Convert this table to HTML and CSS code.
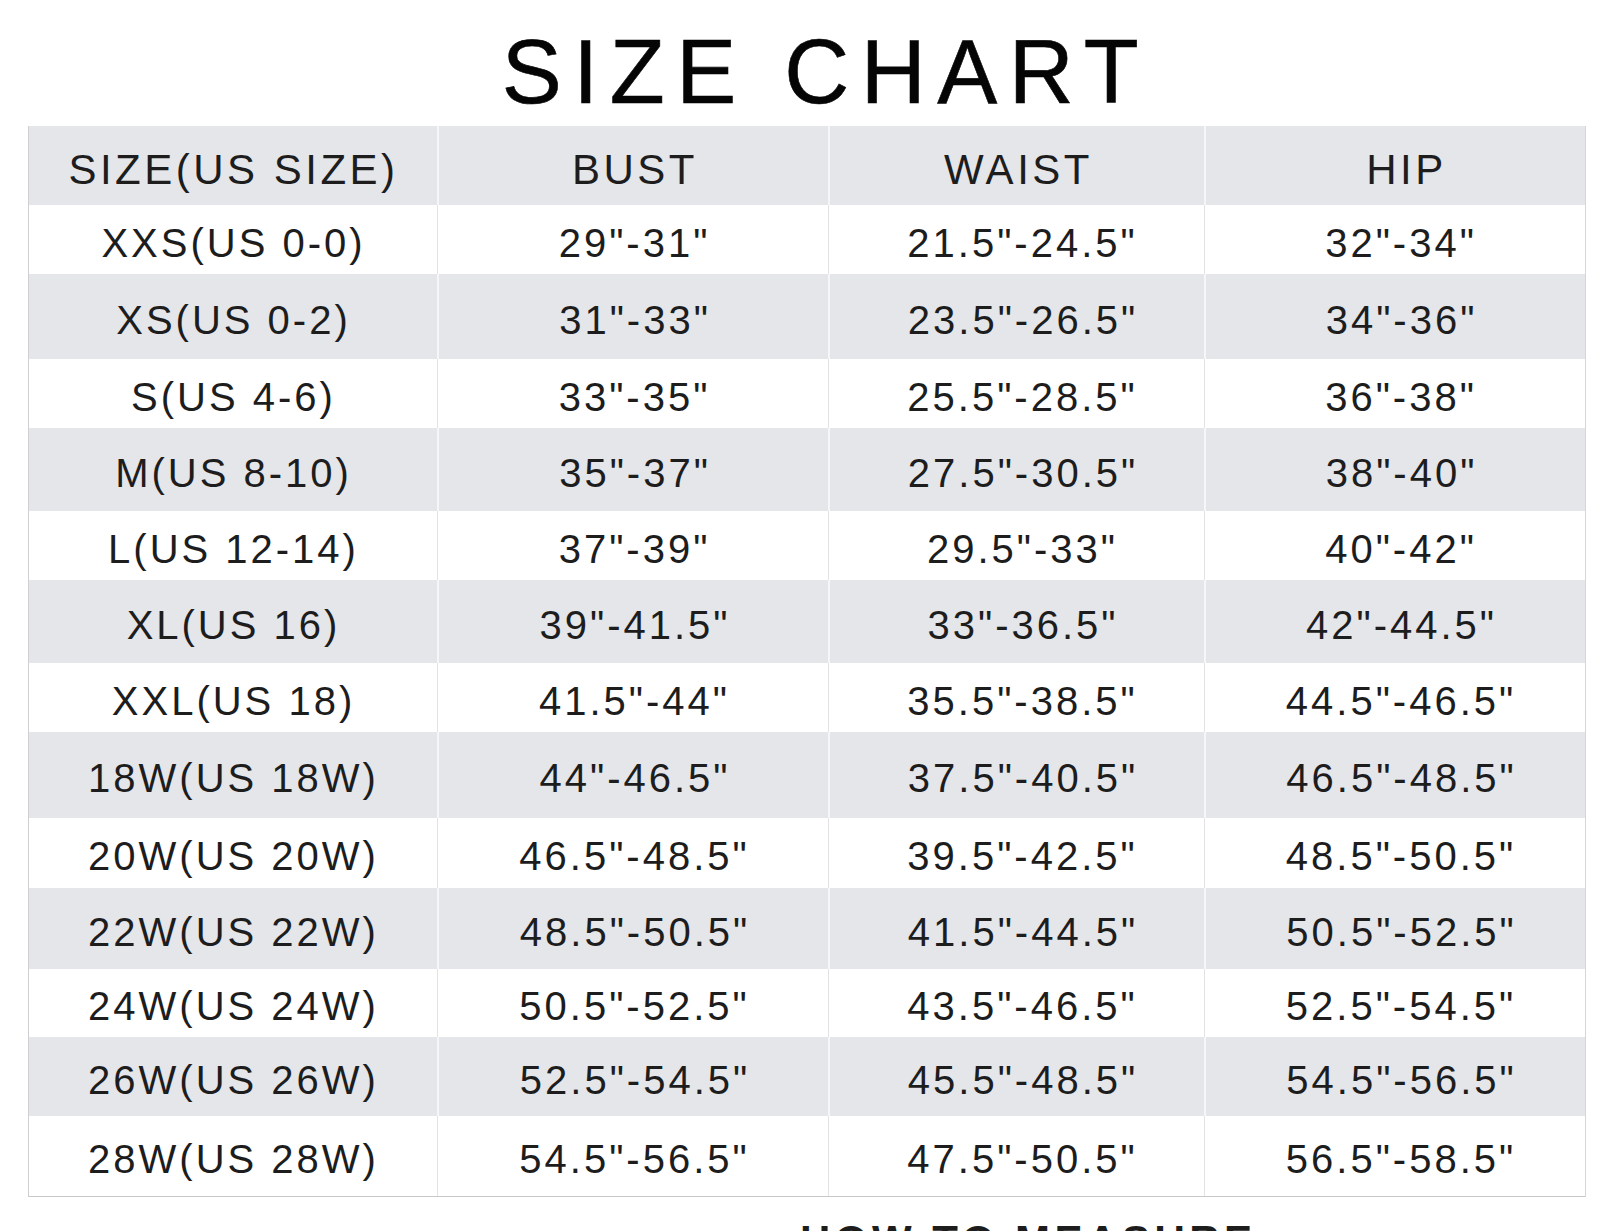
FILE: index.html
```html
<!DOCTYPE html>
<html lang="en">
<head>
<meta charset="utf-8">
<title>Size Chart</title>
<link rel="stylesheet" href="styles.css">
</head>
<body>
<main class="page">
  <h1 class="title">SIZE CHART</h1>
  <div class="chart">
    <div class="row head grey">
      <div class="cell">SIZE(US SIZE)</div><div class="cell">BUST</div><div class="cell">WAIST</div><div class="cell">HIP</div>
    </div>
    <div class="row white">
      <div class="cell">XXS(US 0-0)</div><div class="cell">29"-31"</div><div class="cell">21.5"-24.5"</div><div class="cell">32"-34"</div>
    </div>
    <div class="row grey">
      <div class="cell">XS(US 0-2)</div><div class="cell">31"-33"</div><div class="cell">23.5"-26.5"</div><div class="cell">34"-36"</div>
    </div>
    <div class="row white">
      <div class="cell">S(US 4-6)</div><div class="cell">33"-35"</div><div class="cell">25.5"-28.5"</div><div class="cell">36"-38"</div>
    </div>
    <div class="row grey">
      <div class="cell">M(US 8-10)</div><div class="cell">35"-37"</div><div class="cell">27.5"-30.5"</div><div class="cell">38"-40"</div>
    </div>
    <div class="row white">
      <div class="cell">L(US 12-14)</div><div class="cell">37"-39"</div><div class="cell">29.5"-33"</div><div class="cell">40"-42"</div>
    </div>
    <div class="row grey">
      <div class="cell">XL(US 16)</div><div class="cell">39"-41.5"</div><div class="cell">33"-36.5"</div><div class="cell">42"-44.5"</div>
    </div>
    <div class="row white">
      <div class="cell">XXL(US 18)</div><div class="cell">41.5"-44"</div><div class="cell">35.5"-38.5"</div><div class="cell">44.5"-46.5"</div>
    </div>
    <div class="row grey">
      <div class="cell">18W(US 18W)</div><div class="cell">44"-46.5"</div><div class="cell">37.5"-40.5"</div><div class="cell">46.5"-48.5"</div>
    </div>
    <div class="row white">
      <div class="cell">20W(US 20W)</div><div class="cell">46.5"-48.5"</div><div class="cell">39.5"-42.5"</div><div class="cell">48.5"-50.5"</div>
    </div>
    <div class="row grey">
      <div class="cell">22W(US 22W)</div><div class="cell">48.5"-50.5"</div><div class="cell">41.5"-44.5"</div><div class="cell">50.5"-52.5"</div>
    </div>
    <div class="row white">
      <div class="cell">24W(US 24W)</div><div class="cell">50.5"-52.5"</div><div class="cell">43.5"-46.5"</div><div class="cell">52.5"-54.5"</div>
    </div>
    <div class="row grey">
      <div class="cell">26W(US 26W)</div><div class="cell">52.5"-54.5"</div><div class="cell">45.5"-48.5"</div><div class="cell">54.5"-56.5"</div>
    </div>
    <div class="row white">
      <div class="cell">28W(US 28W)</div><div class="cell">54.5"-56.5"</div><div class="cell">47.5"-50.5"</div><div class="cell">56.5"-58.5"</div>
    </div>
  </div>
  <h2 class="measure">HOW TO MEASURE</h2>
</main>
</body>
</html>
```
FILE: styles.css
```css
html, body {
  margin: 0;
  padding: 0;
  background: #ffffff;
  height: 1231px;
  overflow: hidden;
}

.page {
  display: flex;
  flex-direction: column;
  font-family: "Liberation Sans", Arial, sans-serif;
  color: #1d1d1d;
}

.title {
  margin: 27px 0 0 0;
  padding-left: 52px;
  height: 90px;
  font-size: 90px;
  line-height: 1;
  font-weight: 400;
  letter-spacing: 11.5px;
  text-align: center;
  color: #050505;
  -webkit-text-stroke: 0.6px #050505;
}

.chart {
  margin: 9px 0 0 28px;
  width: 1558px;
  box-sizing: border-box;
  border-left: 1px solid #cfcfd2;
  border-right: 1px solid #d6d6d8;
  border-bottom: 1px solid #c9c9cb;
  display: grid;
  grid-template-rows: 79px 69px 85px 69px 83px 69px 83px 69px 86px 70px 81px 68px 79px 80px;
}

.row {
  display: grid;
  grid-template-columns: 408px 391px 376px 381px;
}

.grey {
  background: #e5e6ea;
}

.white {
  background: #ffffff;
}

.cell {
  display: flex;
  align-items: center;
  justify-content: center;
  box-sizing: border-box;
  padding: 6px 0 0 3px;
  font-size: 40px;
  line-height: 1;
  letter-spacing: 3px;
  white-space: nowrap;
}

.cell:first-child {
  padding-left: 1px;
  padding-right: 0;
}

.cell:nth-child(3),
.cell:nth-child(4) {
  padding-left: 12px;
}

.grey .cell + .cell {
  border-left: 2px solid #f6f6f8;
}

.white .cell + .cell {
  border-left: 1px solid #e3e3e5;
}

.head .cell {
  font-size: 42px;
  letter-spacing: 3.5px;
  padding-top: 9px;
}

.head .cell:nth-child(3) {
  padding-left: 3px;
}

.head .cell:nth-child(4) {
  padding-left: 22px;
}

.measure {
  margin: 23px 0 0 800px;
  font-size: 42px;
  line-height: 1;
  font-weight: 700;
  letter-spacing: 4.5px;
  color: #1d1d1d;
  white-space: nowrap;
}
```
